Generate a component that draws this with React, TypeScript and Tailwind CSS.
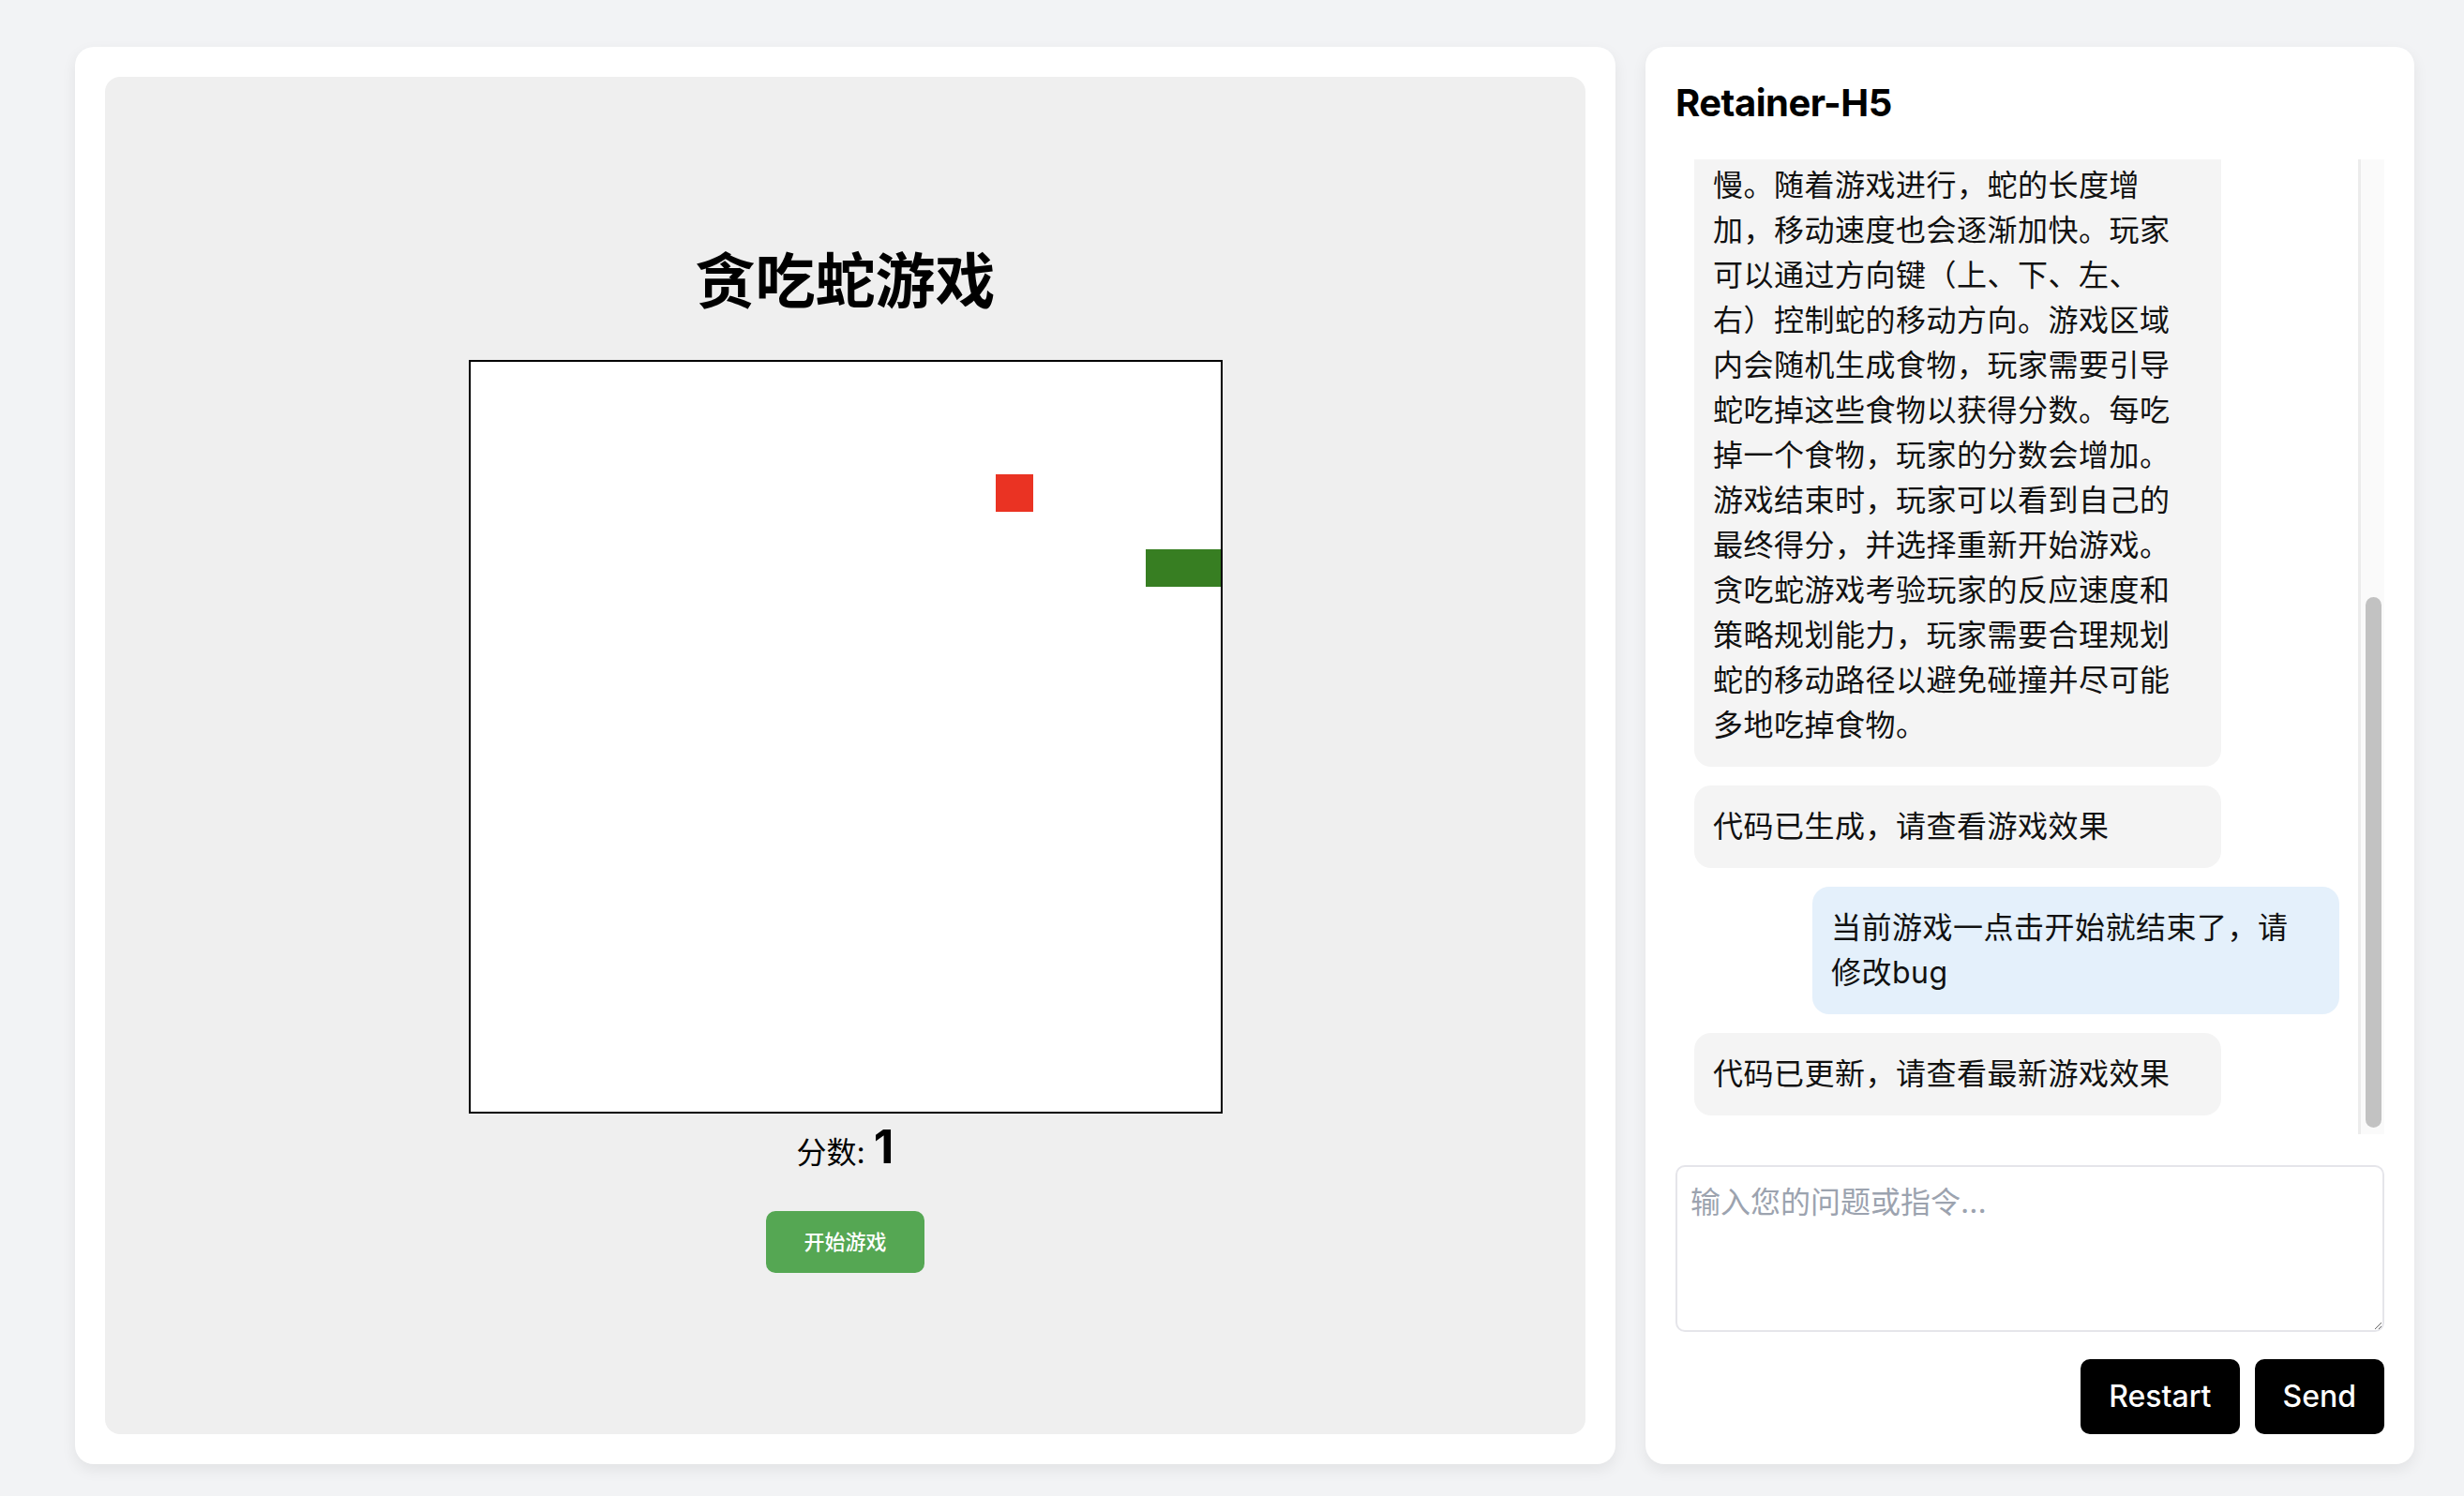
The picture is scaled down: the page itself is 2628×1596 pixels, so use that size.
import { useLayoutEffect, useRef } from 'react';

type Message = { id: number; role: 'user' | 'assistant'; lines: string[] };

const messages: Message[] = [
  { id: 1, role: 'user', lines: ['帮我开发一个贪吃蛇小游戏'] },
  { id: 2, role: 'assistant', lines: ['好的，下面是游戏的需求说明：'] },
  {
    id: 3,
    role: 'assistant',
    lines: [
      '游戏名称：贪吃蛇游戏',
      '游戏描述：贪吃蛇是一款经典的休',
      '闲益智类游戏。玩家通过键盘控制',
      '一条小蛇在矩形区域内不断移动，',
      '蛇每吃掉一个食物，身体就会变长',
      '一节。当蛇头撞到墙壁或自己的身',
      '体时，游戏结束。',
      '游戏规则：游戏开始时，蛇位于游',
      '戏区域的中央，初始长度为两节，',
      '并以固定的方向自动前进。玩家需',
      '要在蛇撞墙之前改变它的方向。蛇',
      '的初始移动速度适中，不快也不太',
      '慢。随着游戏进行，蛇的长度增',
      '加，移动速度也会逐渐加快。玩家',
      '可以通过方向键（上、下、左、',
      '右）控制蛇的移动方向。游戏区域',
      '内会随机生成食物，玩家需要引导',
      '蛇吃掉这些食物以获得分数。每吃',
      '掉一个食物，玩家的分数会增加。',
      '游戏结束时，玩家可以看到自己的',
      '最终得分，并选择重新开始游戏。',
      '贪吃蛇游戏考验玩家的反应速度和',
      '策略规划能力，玩家需要合理规划',
      '蛇的移动路径以避免碰撞并尽可能',
      '多地吃掉食物。',
    ],
  },
  { id: 4, role: 'assistant', lines: ['代码已生成，请查看游戏效果'] },
  { id: 5, role: 'user', lines: ['当前游戏一点击开始就结束了，请', '修改bug'] },
  { id: 6, role: 'assistant', lines: ['代码已更新，请查看最新游戏效果'] },
];

const food = { x: 14, y: 3 };
const snake = [
  { x: 19, y: 5 },
  { x: 18, y: 5 },
];

function GameBoard() {
  return (
    <div className="border-2 border-black bg-white">
      <svg width={800} height={800} viewBox="0 0 20 20" shapeRendering="crispEdges" className="block">
        <rect x={food.x} y={food.y} width={1} height={1} fill="#ea3323" />
        {snake.map((s) => (
          <rect key={`${s.x}-${s.y}`} x={s.x} y={s.y} width={1} height={1} fill="#377e22" />
        ))}
      </svg>
    </div>
  );
}

function ChatBubble({ msg }: { msg: Message }) {
  const isUser = msg.role === 'user';
  return (
    <div
      className={
        isUser
          ? 'self-end w-[562px] shrink-0 rounded-[18px] bg-[#e4f0fb] px-[20px] py-[20px] text-[32px] leading-[48px] tracking-[0.5px] text-[#111]'
          : 'self-start w-[562px] shrink-0 rounded-[18px] bg-[#f4f4f4] px-[20px] py-[20px] text-[32px] leading-[48px] tracking-[0.5px] text-[#111]'
      }
    >
      {msg.lines.map((line, i) => (
        <div key={i} className="whitespace-nowrap">
          {line}
        </div>
      ))}
    </div>
  );
}

export default function App() {
  const listRef = useRef<HTMLDivElement>(null);

  // chat opens scrolled to the latest message
  useLayoutEffect(() => {
    const el = listRef.current;
    if (el) el.scrollTop = el.scrollHeight;
  }, []);

  return (
    <div className="min-h-screen bg-[#f2f3f5] pl-[80px] pr-[53px] pt-[50px] pb-[34px] font-[Inter,'Noto_Sans_CJK_SC',sans-serif] text-black">
      <div className="flex h-[1512px] gap-[32px]">
        {/* game preview */}
        <div className="flex flex-1 flex-col rounded-[20px] bg-white p-[32px] shadow-[0_6px_16px_rgba(0,0,0,0.07)]">
          <div className="flex flex-1 flex-col items-center rounded-[16px] bg-[#efefef] pt-[186px]">
            <h1 className="text-[64px] leading-[64px] font-bold">贪吃蛇游戏</h1>
            <div className="mt-[52px]">
              <GameBoard />
            </div>
            <div className="mt-[10px] flex items-baseline text-[32px] leading-none">
              <span>分数:&nbsp;</span>
              <span className="text-[50px] leading-none font-bold">1</span>
            </div>
            <button className="mt-[44px] rounded-[10px] bg-[#55a753] px-[40px] py-[18px] text-[22px] leading-[30px] font-medium text-white">
              开始游戏
            </button>
          </div>
        </div>

        {/* chat panel */}
        <div className="flex w-[820px] flex-col rounded-[20px] bg-white p-[32px] shadow-[0_6px_16px_rgba(0,0,0,0.07)]">
          <h2 className="text-[40px] leading-[56px] font-bold tracking-[-0.5px]">Retainer-H5</h2>
          <div className="mt-[32px] flex h-[1040px]">
            <div ref={listRef} className="flex flex-1 flex-col gap-[20px] overflow-hidden p-[20px]">
              {messages.map((m) => (
                <ChatBubble key={m.id} msg={m} />
              ))}
            </div>
            {/* scrollbar */}
            <div className="flex w-[28px] flex-col justify-end border-l-[3px] border-[#ececec] bg-[#fafafa] pb-[7px] pl-[5px] pr-[3px]">
              <div className="h-[566px] rounded-full bg-[#c2c2c2]" />
            </div>
          </div>
          <textarea
            placeholder="输入您的问题或指令..."
            className="mt-[33px] h-[178px] w-full resize-y rounded-[10px] border-2 border-[#e5e5ea] bg-white px-[14px] py-[14px] text-[32px] leading-[48px] outline-none placeholder:text-[#9ca3af]"
          />
          <div className="mt-[29px] flex justify-end gap-[16px]">
            <button className="h-[80px] rounded-[10px] bg-black px-[30px] text-[32px] font-medium text-white">Restart</button>
            <button className="h-[80px] rounded-[10px] bg-black px-[30px] text-[32px] font-medium text-white">Send</button>
          </div>
        </div>
      </div>
    </div>
  );
}
